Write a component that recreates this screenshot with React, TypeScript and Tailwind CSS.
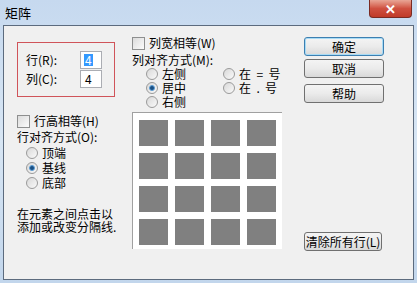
import React from "react";

const FONT = { fontFamily: '"Noto Sans CJK SC", "Liberation Sans", sans-serif' };

function CheckBox({ label }: { label: string }) {
  return (
    <div className="flex items-center gap-[4px] h-[14px]">
      <span className="w-[13px] h-[13px] border border-[#8e8f8f] bg-gradient-to-br from-[#dcdcdc] to-[#fbfbfb] shrink-0" />
      <span>{label}</span>
    </div>
  );
}

function Radio({ label, checked }: { label: string; checked?: boolean }) {
  return (
    <div className="flex items-center gap-[4px] h-[13px] leading-[13px]">
      <span className="w-[12px] h-[12px] rounded-full border border-[#9a9a9a] bg-gradient-to-br from-[#d8d8d8] to-[#fafafa] flex items-center justify-center shrink-0">
        {checked && <span className="w-[6px] h-[6px] rounded-full bg-[#1b4f83] border border-[#5ea0d8]" />}
      </span>
      <span className="whitespace-pre">{label}</span>
    </div>
  );
}

function Button({ label, primary, className = "" }: { label: string; primary?: boolean; className?: string }) {
  return (
    <button
      className={`h-[19px] rounded-[3px] border text-[12px] leading-none bg-gradient-to-b from-[#f4f4f4] via-[#ebebeb] to-[#d9d9d9] ${
        primary ? "border-[#3c7fb1] shadow-[inset_0_0_0_1px_#a8dbf5]" : "border-[#707070]"
      } ${className}`}
    >
      {label}
    </button>
  );
}

export default function App() {
  return (
    <div
      className="w-[417px] h-[283px] flex flex-col bg-gradient-to-b from-[#c6d9ef] via-[#d8e6f4] to-[#c2d6ec] text-[12px] leading-[14px] text-black overflow-hidden"
      style={FONT}
    >
      {/* Title bar */}
      <div className="h-[25px] flex items-start justify-between shrink-0">
        <span className="pl-[5px] pt-[5px] text-[13px] leading-[16px]">矩阵</span>
        <div className="mr-[5px] w-[43px] h-[18px] rounded-b-[4px] border border-[#7a2a22] border-t-0 bg-gradient-to-b from-[#e8a596] via-[#cf5040] to-[#c03a28] flex items-center justify-center text-white text-[13px] font-bold">
          ✕
        </div>
      </div>

      {/* Client area */}
      <div className="mx-[3px] mb-[3px] flex-1 bg-[#f0f0f0] border border-[#5c6b7e] flex">
        {/* Left column */}
        <div className="w-[128px] pl-[13px] pt-[16px] flex flex-col">
          <div className="w-[98px] h-[55px] border border-[#d0545a] flex flex-col justify-center gap-[1px] pl-[8px]">
            <div className="flex items-center">
              <span className="w-[54px]">行(R):</span>
              <span className="w-[22px] h-[18px] border border-[#abadb3] bg-white flex items-center pl-[3px]">
                <span className="bg-[#3399ff] text-white leading-[12px] px-[1px]">4</span>
              </span>
            </div>
            <div className="flex items-center">
              <span className="w-[54px]">列(C):</span>
              <span className="w-[22px] h-[18px] border border-[#abadb3] bg-white flex items-center pl-[4px]">4</span>
            </div>
          </div>
          <div className="mt-[17px]">
            <CheckBox label="行高相等(H)" />
          </div>
          <div className="mt-[2px]">行对齐方式(O):</div>
          <div className="pl-[9px] flex flex-col gap-[2px] mt-[2px]">
            <Radio label="顶端" />
            <Radio label="基线" checked />
            <Radio label="底部" />
          </div>
          <div className="mt-[18px] leading-[13px]">
            在元素之间点击以
            <br />
            添加或改变分隔线.
          </div>
        </div>

        {/* Middle column */}
        <div className="w-[150px] pt-[10px] flex flex-col">
          <CheckBox label="列宽相等(W)" />
          <div className="mt-[3px]">列对齐方式(M):</div>
          <div className="flex pl-[14px]">
            <div className="w-[77px] flex flex-col gap-[1px]">
              <Radio label="左侧" />
              <Radio label="居中" checked />
              <Radio label="右侧" />
            </div>
            <div className="flex flex-col gap-[1px]">
              <Radio label="在  =  号" />
              <Radio label="在  .  号" />
            </div>
          </div>
          <div className="mt-[4px] h-[137px] bg-white border-l border-t border-[#a0a0a0] pl-[6px] pt-[7px] grid grid-cols-[repeat(4,29px)] grid-rows-[repeat(4,26px)] gap-x-[7px] gap-y-[7px]">
            {Array.from({ length: 16 }).map((_, i) => (
              <div key={i} className="bg-[#808080]" />
            ))}
          </div>
        </div>

        {/* Right column */}
        <div className="flex-1 pl-[22px] pt-[11px] pb-[28px] flex flex-col">
          <Button label="确定" primary className="w-[80px]" />
          <Button label="取消" className="w-[80px] mt-[3px]" />
          <Button label="帮助" className="w-[80px] mt-[6px]" />
          <div className="flex-1" />
          <Button label="清除所有行(L)" className="w-[78px] text-[11px]" />
        </div>
      </div>
    </div>
  );
}
